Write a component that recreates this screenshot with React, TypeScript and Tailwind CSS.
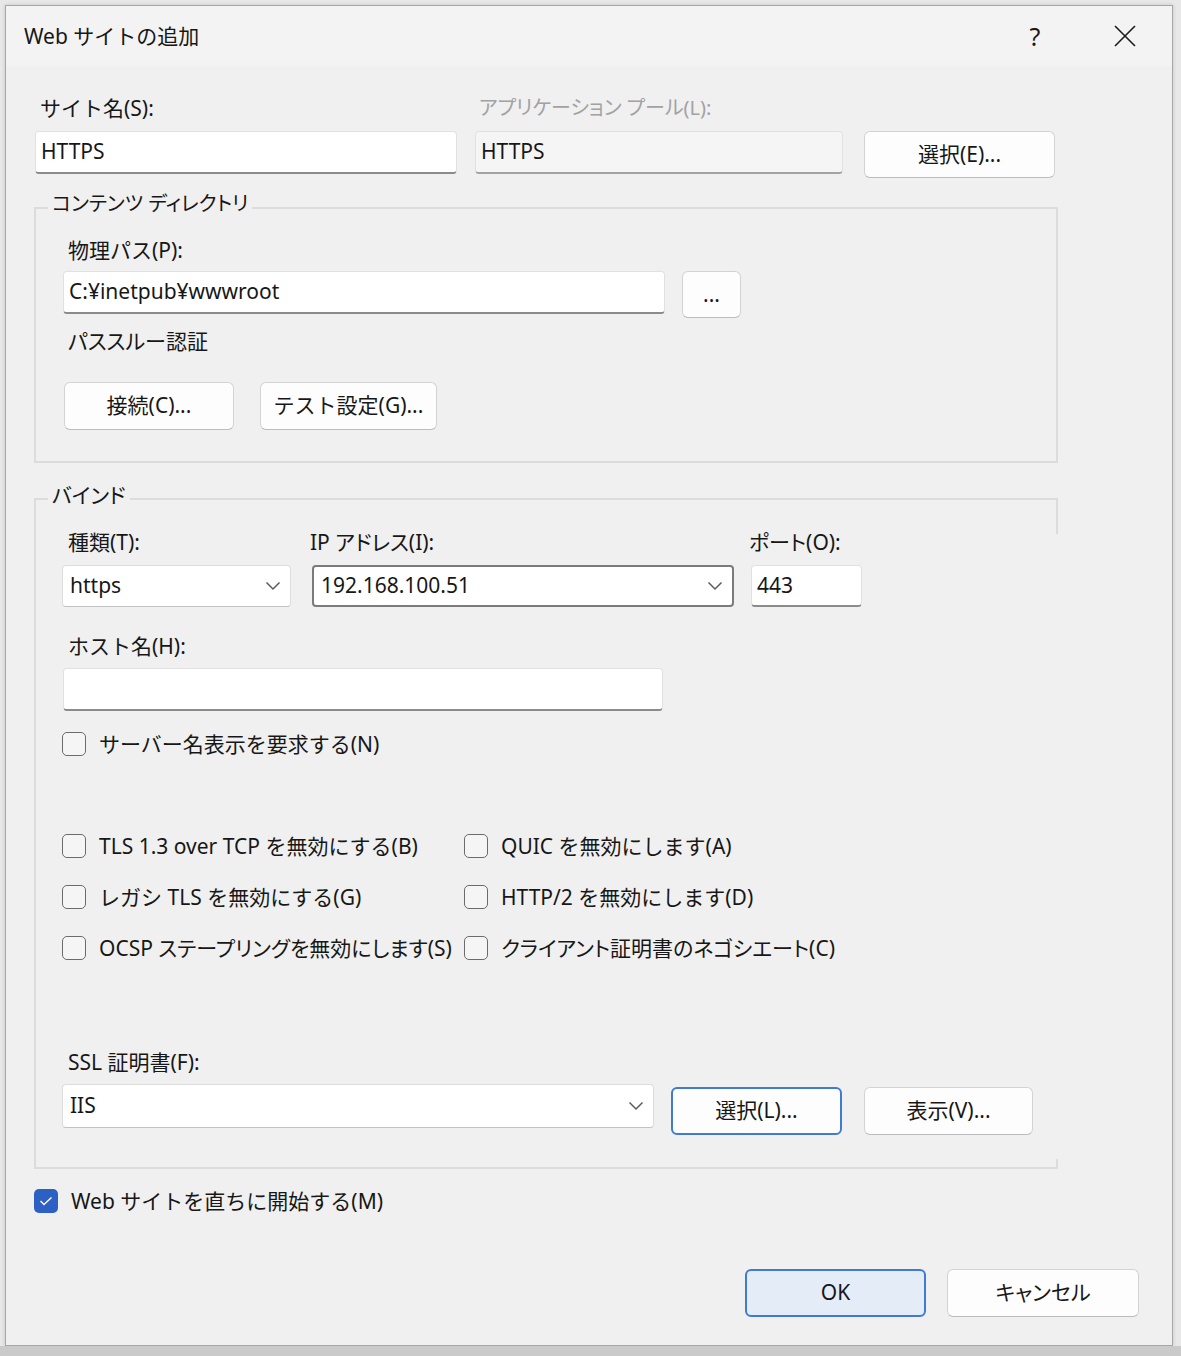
import React from "react";

type Kids = { children?: React.ReactNode; className?: string };

const PALT = "[font-feature-settings:'palt']";

const Label = ({ children, className = "" }: Kids) => (
  <div className={`leading-[28px] text-[21px] whitespace-nowrap ${className}`}>{children}</div>
);

const TextBox = ({ children, className = "" }: Kids) => (
  <div
    className={`flex items-center pl-[5px] rounded-[4px] border border-[#e1e1e1] border-b-2 border-b-[#8b8b8b] text-[21px] ${className}`}
  >
    {children}
  </div>
);

const Chevron = () => (
  <svg width="16" height="10" viewBox="0 0 16 10" className="shrink-0">
    <path d="M1.5 1.5 L8 8 L14.5 1.5" fill="none" stroke="#5c5c5c" strokeWidth="1.5" />
  </svg>
);

const Select = ({ children, className = "", focused = false }: Kids & { focused?: boolean }) => (
  <div
    className={`flex items-center justify-between pl-[7px] pr-[9px] rounded-[4px] bg-white text-[21px] ${
      focused ? "border-2 border-[#7b7b7b]" : "border border-[#dcdcdc] border-b-[#c2c2c2]"
    } ${className}`}
  >
    <span>{children}</span>
    <Chevron />
  </div>
);

const Button = ({
  children,
  className = "",
  variant = "plain",
}: Kids & { variant?: "plain" | "outline" | "default" }) => {
  const look =
    variant === "default"
      ? "bg-[#e3ecf7] border-2 border-[#3f7bd3]"
      : variant === "outline"
      ? "bg-[#fdfdfd] border-2 border-[#3f7bd3]"
      : "bg-[#fdfdfd] border border-[#d3d3d3] border-b-[#bcbcbc]";
  return (
    <div className={`flex items-center justify-center rounded-[6px] text-[21px] ${look} ${className}`}>
      {children}
    </div>
  );
};

const Check = ({ label, checked = false, prop = false }: { label: string; checked?: boolean; prop?: boolean }) => (
  <div className="flex items-center h-[28px] gap-[13px] whitespace-nowrap">
    {checked ? (
      <span className="w-[24px] h-[24px] rounded-[5px] bg-[#2c60c2] flex items-center justify-center">
        <svg width="14" height="10" viewBox="0 0 14 10">
          <path d="M1.5 5 L5 8.5 L12.5 1.5" fill="none" stroke="#ffffff" strokeWidth="1.4" />
        </svg>
      </span>
    ) : (
      <span className="w-[24px] h-[24px] rounded-[5px] border-[1.5px] border-[#6b6b6b] bg-[#f5f5f5]" />
    )}
    <span className={`text-[21px] leading-[28px] ${prop ? PALT : ""}`}>{label}</span>
  </div>
);

const Legend = ({ children, className = "" }: Kids) => (
  <div
    className={`-mt-[19px] -ml-[14px] w-fit px-[4px] bg-[#f0f0f0] leading-[28px] [font-feature-settings:'palt'] ${className}`}
  >
    {children}
  </div>
);

export default function App() {
  return (
    <div className="w-[1181px] h-[1356px] overflow-hidden flex flex-col bg-[#e8e8e8] text-[#171717] font-['Noto_Sans','Noto_Sans_CJK_JP',sans-serif]">
      <div className="h-[5px] shrink-0" />
      <div className="flex shrink-0">
        <div className="w-[5px] shrink-0" />
        <div className="w-[1168px] h-[1341px] border border-[#a7a7a7] bg-[#f0f0f0] flex flex-col shadow-[0_0_4px_rgba(0,0,0,0.15)]">
          {/* title bar */}
          <div className="h-[60px] shrink-0 bg-[#f3f3f3] flex items-center pl-[18px] pr-[24px]">
            <div className="text-[21px] leading-[28px]">Web サイトの追加</div>
            <div className="flex-1" />
            <div className="w-[46px] text-center text-[25px] leading-[28px]">?</div>
            <div className="w-[46px] ml-[44px] flex justify-center">
              <svg width="24" height="24" viewBox="0 0 24 24">
                <path d="M2 2 L22 22 M22 2 L2 22" stroke="#1b1b1b" strokeWidth="1.6" />
              </svg>
            </div>
          </div>

          {/* body */}
          <div className="flex flex-col pl-[28px]">
            <div className="mt-[28px] flex items-start">
              <div className="ml-[1px] w-[422px]">
                <Label className="ml-[5px]">サイト名(S):</Label>
                <TextBox className="mt-[9px] h-[43px] bg-white">HTTPS</TextBox>
              </div>
              <div className="ml-[18px] w-[368px]">
                <Label className="ml-[4px] !text-[20px] text-[#a2a2a2] [font-feature-settings:'palt']">
                  アプリケーション プール(L):
                </Label>
                <TextBox className="mt-[9px] h-[43px] bg-[#f5f5f5] border-b-[#a3a3a3]">HTTPS</TextBox>
              </div>
              <Button className="ml-[21px] mt-[37px] w-[191px] h-[47px]">選択(E)...</Button>
            </div>

            {/* content directory */}
            <div className="mt-[29px] w-[1024px] border-2 border-[#dcdcdc] pl-[26px] pb-[31px]">
              <Legend className="text-[20px]">コンテンツ ディレクトリ</Legend>
              <Label className="mt-[18px] ml-[6px]">物理パス(P):</Label>
              <div className="mt-[7px] flex items-start">
                <TextBox className="ml-[1px] w-[602px] h-[43px] bg-white">C:¥inetpub¥wwwroot</TextBox>
                <Button className="ml-[17px] w-[59px] h-[47px]">...</Button>
              </div>
              <Label className="mt-[9px] ml-[6px] [font-feature-settings:'palt']">パススルー認証</Label>
              <div className="mt-[27px] flex">
                <Button className="ml-[2px] w-[170px] h-[48px]">接続(C)...</Button>
                <Button className="ml-[26px] w-[177px] h-[48px]">テスト設定(G)...</Button>
              </div>
            </div>

            {/* bindings */}
            <div className="relative mt-[35px] w-[1024px] border-2 border-[#dcdcdc] border-r-transparent pl-[26px] pb-[32px]">
              <div className="absolute -right-[2px] -top-[2px] w-[2px] h-[36px] bg-[#dcdcdc]" />
              <div className="absolute -right-[2px] -bottom-[2px] w-[2px] h-[10px] bg-[#dcdcdc]" />
              <Legend className="text-[21px]">バインド</Legend>
              <div className="mt-[19px] flex items-start">
                <div className="w-[229px]">
                  <Label className="ml-[6px]">種類(T):</Label>
                  <Select className="mt-[9px] h-[42px]">https</Select>
                </div>
                <div className="ml-[21px] w-[422px]">
                  <Label className="-ml-[2px] [font-feature-settings:'palt']">IP アドレス(I):</Label>
                  <Select focused className="mt-[9px] h-[42px]">192.168.100.51</Select>
                </div>
                <div className="ml-[17px] w-[111px]">
                  <Label className="-ml-[2px] [font-feature-settings:'palt']">ポート(O):</Label>
                  <TextBox className="mt-[9px] h-[42px] bg-white pl-[3px]">443</TextBox>
                </div>
              </div>
              <Label className="mt-[25px] ml-[6px]">ホスト名(H):</Label>
              <TextBox className="mt-[8px] ml-[1px] w-[600px] h-[43px] bg-white" />
              <div className="mt-[19px]">
                <Check label="サーバー名表示を要求する(N)" />
              </div>
              <div className="mt-[74px] grid grid-cols-[402px_auto] gap-y-[23px]">
                <Check label="TLS 1.3 over TCP を無効にする(B)" />
                <Check label="QUIC を無効にします(A)" />
                <Check label="レガシ TLS を無効にする(G)" />
                <Check label="HTTP/2 を無効にします(D)" />
                <Check prop label="OCSP ステープリングを無効にします(S)" />
                <Check prop label="クライアント証明書のネゴシエート(C)" />
              </div>
              <Label className="mt-[86px] ml-[6px]">SSL 証明書(F):</Label>
              <div className="mt-[8px] flex items-start">
                <Select className="w-[592px] h-[44px]">IIS</Select>
                <Button variant="outline" className="ml-[17px] mt-[3px] w-[171px] h-[48px]">
                  選択(L)...
                </Button>
                <Button className="ml-[22px] mt-[3px] w-[169px] h-[48px]">表示(V)...</Button>
              </div>
            </div>

            <div className="mt-[18px]">
              <Check checked label="Web サイトを直ちに開始する(M)" />
            </div>

            <div className="mt-[54px] flex justify-end pr-[33px]">
              <Button variant="default" className="w-[181px] h-[48px]">OK</Button>
              <Button className="ml-[21px] w-[192px] h-[48px] [font-feature-settings:'palt']">キャンセル</Button>
            </div>
          </div>
        </div>
      </div>
      <div className="flex-1 bg-[#cacaca]" />
    </div>
  );
}
